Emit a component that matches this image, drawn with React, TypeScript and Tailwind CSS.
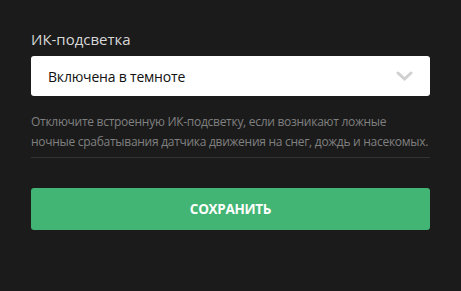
import React from "react";

export default function App() {
  return (
    <div className="w-[461px] h-[291px] bg-[#1b1b1b] pt-[29px] px-[31px]" style={{ fontFamily: '"Open Sans", "Noto Sans", sans-serif' }}>
      <div className="text-[15px] leading-[20px] text-[#d8d8d8]">ИК-подсветка</div>
      <div className="mt-[7px] h-[40px] bg-white rounded-[3px] flex items-center justify-between pl-[17px] pr-[16px]">
        <span className="text-[14px] tracking-[-0.2px] text-[#111]">Включена в темноте</span>
        <svg width="17" height="10" viewBox="0 0 17 10" className="mr-[1px]">
          <path d="M2 2 L8.5 8 L15 2" fill="none" stroke="#d0d0d0" strokeWidth="3" strokeLinecap="round" />
        </svg>
      </div>
      <div className="mt-[16px] text-[12px] leading-[20px] tracking-[-0.28px] text-[#808080] pb-[5px] border-b border-[#333333]">
        Отключите встроенную ИК-подсветку, если возникают ложные ночные срабатывания датчика движения на снег, дождь и насекомых.
      </div>
      <button className="mt-[30px] w-full h-[42px] rounded-[3px] bg-[#42b574] text-white text-[13.5px] tracking-[-0.3px] font-bold flex items-center justify-center">
        СОХРАНИТЬ
      </button>
    </div>
  );
}
